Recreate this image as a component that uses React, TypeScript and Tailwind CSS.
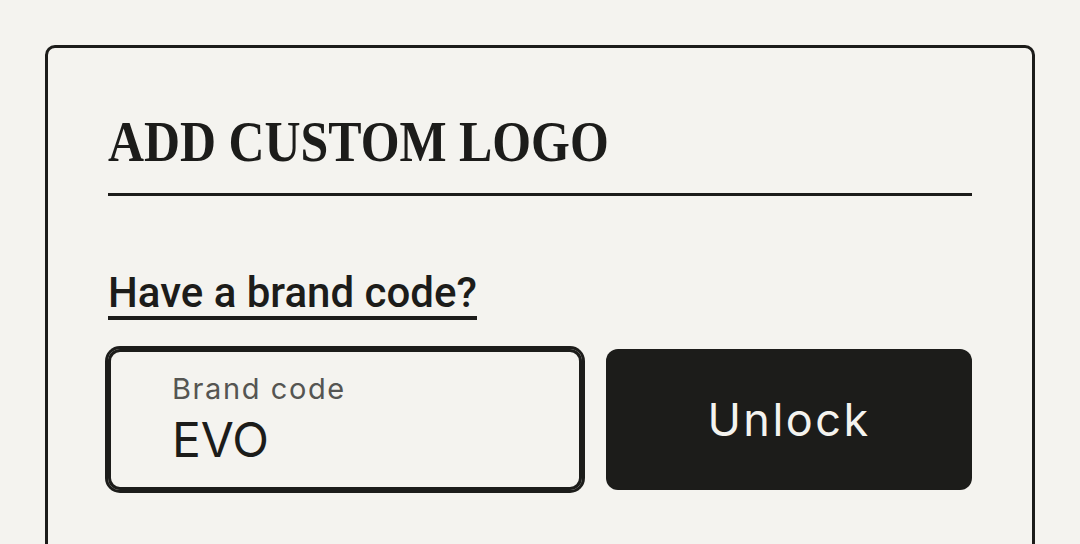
import React from "react";

const INK = "#1c1c1a";

const App = () => {
  return (
    <main className="h-screen overflow-hidden bg-[#f4f3ef] px-[45px] pt-[45px]">
      <section className="rounded-[10px] border-[3px] border-[#1c1c1a] bg-[#f4f3ef] px-[60px] pt-[65px] pb-[120px]">
        <div className="border-b-[3px] border-[#1c1c1a] pb-[22px]">
          <h2
            className="inline-block origin-left scale-x-[0.86] whitespace-nowrap text-[58px] leading-none font-bold text-[#1c1c1a]"
            style={{ fontFamily: '"Liberation Serif", "Times New Roman", serif' }}
          >
            ADD CUSTOM LOGO
          </h2>
        </div>

        <div className="mt-[76px]">
          <span
            className="inline-block border-b-[4px] border-[#1c1c1a] pb-[2px] text-[42px] leading-none font-medium text-[#1c1c1a]"
            style={{ fontFamily: "Roboto, sans-serif" }}
          >
            Have a brand code?
          </span>
        </div>

        <div
          className="mt-[29px] grid grid-cols-[474px_1fr] gap-[24px]"
          style={{ fontFamily: "Inter, sans-serif" }}
        >
          <label className="flex h-[141px] flex-col rounded-[12px] border-[3px] border-[#1c1c1a] pt-[22px] pl-[61px] ring-3 ring-[#1c1c1a]">
            <span className="text-[29px] leading-none tracking-[0.055em] text-[#555552]">
              Brand code
            </span>
            <input
              defaultValue="EVO"
              className="mt-[7px] w-full bg-transparent text-[48px] leading-none text-[#1c1c1a] outline-none"
            />
          </label>
          <button
            className="flex h-[141px] items-center justify-center rounded-[12px] text-[45px] tracking-[0.055em] text-[#f4f3ef]"
            style={{ backgroundColor: INK }}
          >
            Unlock
          </button>
        </div>
      </section>
    </main>
  );
};

export default App;
